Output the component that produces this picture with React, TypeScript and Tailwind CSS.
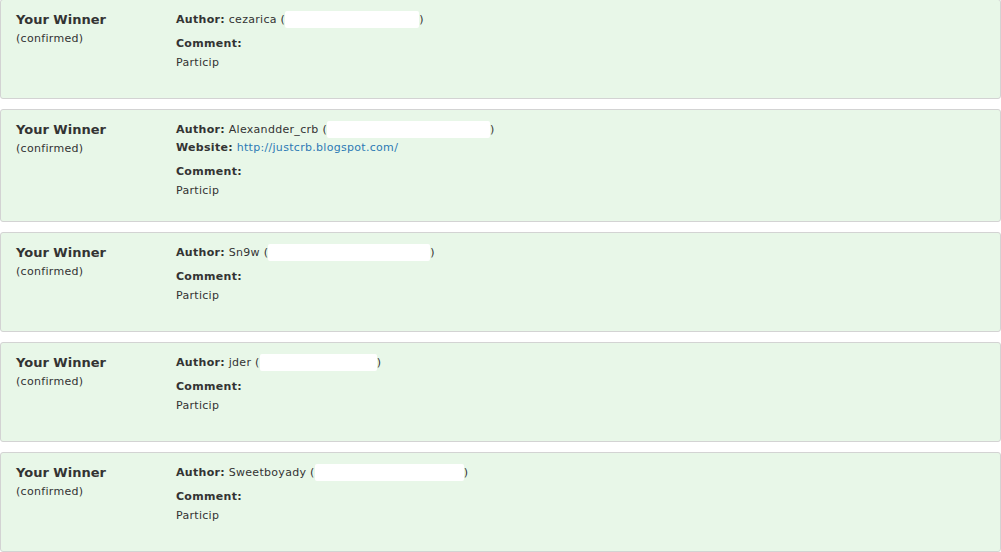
import React from 'react';

interface Entry {
  author: string;
  hidden: number;
  website?: string;
  comment: string;
}

const entries: Entry[] = [
  { author: 'cezarica', hidden: 134, comment: 'Particip' },
  { author: 'Alexandder_crb', hidden: 163, website: 'http://justcrb.blogspot.com/', comment: 'Particip' },
  { author: 'Sn9w', hidden: 162, comment: 'Particip' },
  { author: 'jder', hidden: 117, comment: 'Particip' },
  { author: 'Sweetboyady', hidden: 149, comment: 'Particip' },
];

function WinnerCard({ entry, first }: { entry: Entry; first: boolean }) {
  return (
    <div
      className={`${first ? '-mt-px' : ''} box-border min-h-[100px] rounded-[3px] border border-[#d3d3d3] bg-[#e8f7e8] pl-[15px] pt-[11px] pb-[21px] grid grid-cols-[160px_1fr]`}
    >
      <div>
        <div className="text-[13px] leading-[18px] font-bold text-[#333]">Your Winner</div>
        <div className="text-[11px] leading-[20px] tracking-[0.3px] text-[#333]">(confirmed)</div>
      </div>
      <div className="text-[11px] tracking-[0.3px] text-[#333]">
        <div className="leading-[18px]">
          <b>Author:</b> {entry.author} (
          <span
            className="inline-block h-[17px] rounded-[2px] bg-white align-[-5px]"
            style={{ width: entry.hidden }}
          ></span>
          )
        </div>
        {entry.website && (
          <div className="leading-[18px]">
            <b>Website:</b>{' '}
            <a href="#" className="text-[#2d7ab5]">
              {entry.website}
            </a>
          </div>
        )}
        <div className="mt-[6px] leading-[18px] font-bold">Comment:</div>
        <div className="leading-[19px]">{entry.comment}</div>
      </div>
    </div>
  );
}

export default function App() {
  return (
    <div
      className="w-[1001px] h-[552px] overflow-hidden bg-white flex flex-col gap-[10px]"
      style={{ fontFamily: '"DejaVu Sans", Verdana, sans-serif' }}
    >
      {entries.map((e, i) => (
        <WinnerCard key={i} entry={e} first={i === 0} />
      ))}
    </div>
  );
}
